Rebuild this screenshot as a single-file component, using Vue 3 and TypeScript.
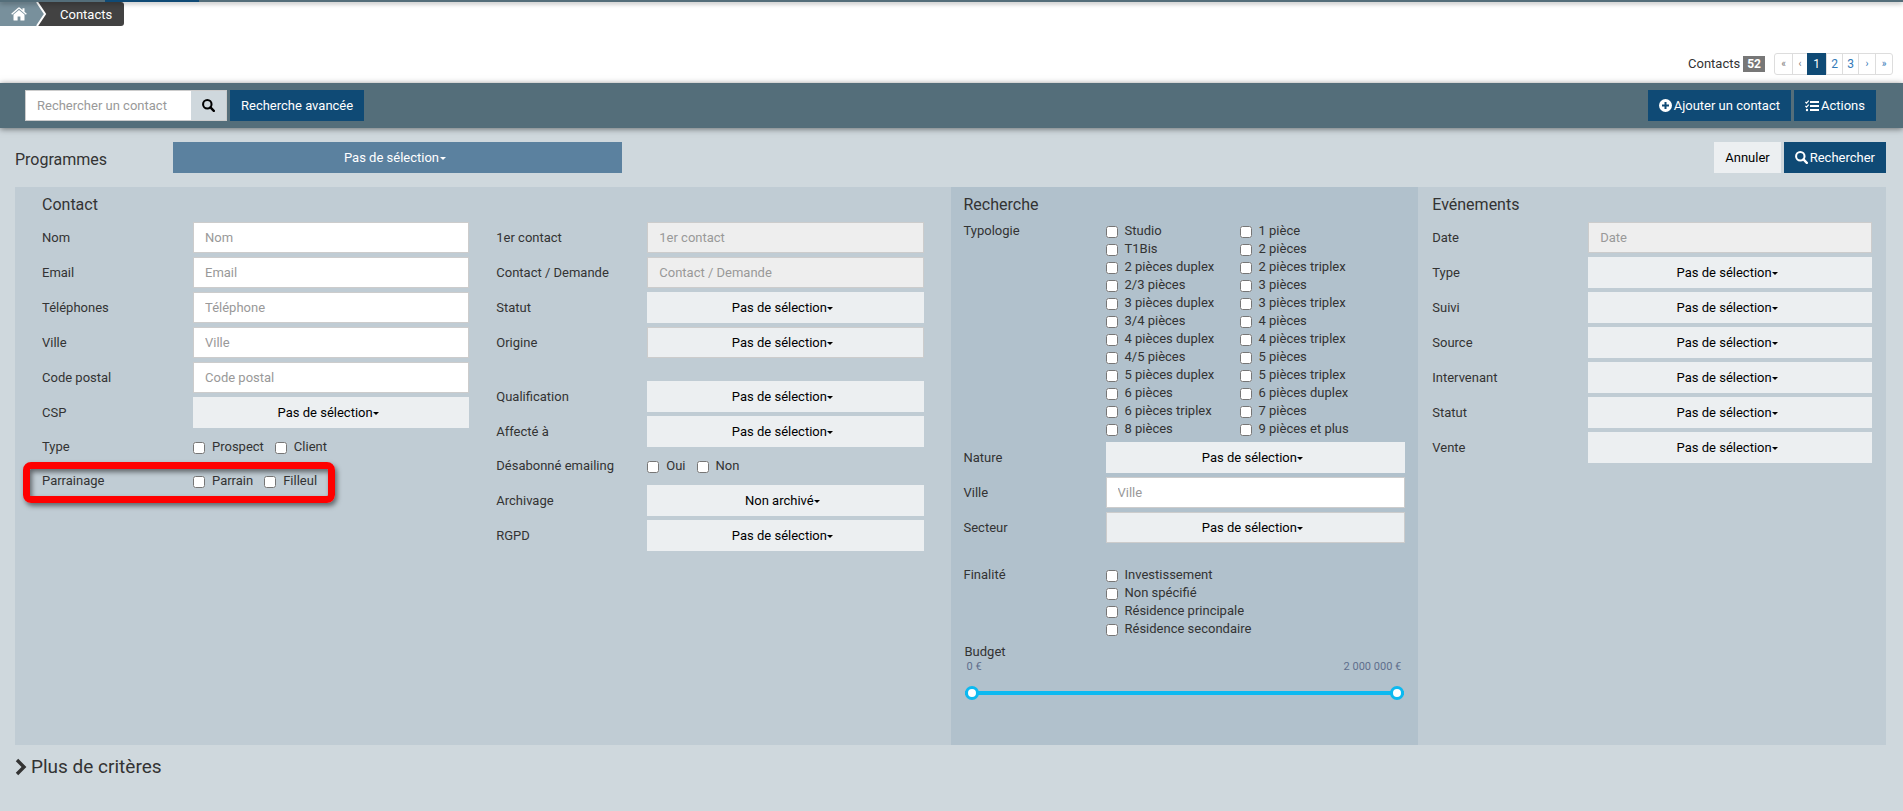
<script setup lang="ts">
import { ref } from 'vue'

interface Field {
  id: string
  label: string
  kind: 'text' | 'locked' | 'select' | 'checks'
  value?: string
  options?: string[]
  bordered?: boolean
  spaced?: boolean
  marked?: boolean
}

const none = 'Pas de sélection'

const contactLeft: Field[] = [
  { id: 'nom', label: 'Nom', kind: 'text', value: 'Nom' },
  { id: 'email', label: 'Email', kind: 'text', value: 'Email' },
  { id: 'tel', label: 'Téléphones', kind: 'text', value: 'Téléphone' },
  { id: 'ville', label: 'Ville', kind: 'text', value: 'Ville' },
  { id: 'cp', label: 'Code postal', kind: 'text', value: 'Code postal' },
  { id: 'csp', label: 'CSP', kind: 'select', value: none },
  { id: 'type', label: 'Type', kind: 'checks', options: ['Prospect', 'Client'] },
  { id: 'parrainage', label: 'Parrainage', kind: 'checks', options: ['Parrain', 'Filleul'], marked: true },
]

const contactRight: Field[] = [
  { id: 'premier', label: '1er contact', kind: 'locked', value: '1er contact' },
  { id: 'demande', label: 'Contact / Demande', kind: 'locked', value: 'Contact / Demande' },
  { id: 'statut', label: 'Statut', kind: 'select', value: none },
  { id: 'origine', label: 'Origine', kind: 'select', value: none, bordered: true },
  { id: 'qualification', label: 'Qualification', kind: 'select', value: none, spaced: true },
  { id: 'affecte', label: 'Affecté à', kind: 'select', value: none },
  { id: 'desabonne', label: 'Désabonné emailing', kind: 'checks', options: ['Oui', 'Non'] },
  { id: 'archivage', label: 'Archivage', kind: 'select', value: 'Non archivé' },
  { id: 'rgpd', label: 'RGPD', kind: 'select', value: none },
]

const rechercheFields: Field[] = [
  { id: 'nature', label: 'Nature', kind: 'select', value: none },
  { id: 'r-ville', label: 'Ville', kind: 'text', value: 'Ville' },
  { id: 'secteur', label: 'Secteur', kind: 'select', value: none, bordered: true },
]

const evenements: Field[] = [
  { id: 'date', label: 'Date', kind: 'locked', value: 'Date' },
  { id: 'e-type', label: 'Type', kind: 'select', value: none },
  { id: 'suivi', label: 'Suivi', kind: 'select', value: none },
  { id: 'source', label: 'Source', kind: 'select', value: none },
  { id: 'intervenant', label: 'Intervenant', kind: 'select', value: none },
  { id: 'e-statut', label: 'Statut', kind: 'select', value: none },
  { id: 'vente', label: 'Vente', kind: 'select', value: none },
]

const contactGroups = [
  { name: 'contact-left', fields: contactLeft },
  { name: 'contact-right', fields: contactRight },
]

const typologies = [
  'Studio', '1 pièce', 'T1Bis', '2 pièces', '2 pièces duplex', '2 pièces triplex',
  '2/3 pièces', '3 pièces', '3 pièces duplex', '3 pièces triplex', '3/4 pièces', '4 pièces',
  '4 pièces duplex', '4 pièces triplex', '4/5 pièces', '5 pièces', '5 pièces duplex', '5 pièces triplex',
  '6 pièces', '6 pièces duplex', '6 pièces triplex', '7 pièces', '8 pièces', '9 pièces et plus',
]
const finalites = ['Investissement', 'Non spécifié', 'Résidence principale', 'Résidence secondaire']

const pages = ['«', '‹', '1', '2', '3', '›', '»']
const budgetMin = ref(0)
const budgetMax = ref(2000000)
</script>

<template>
  <div class="page">
    <div class="topline"><span class="topline-active"></span></div>

    <header class="head">
      <nav class="crumbs" aria-label="Fil d'Ariane">
        <a class="crumb-home" href="#" aria-label="Accueil">
          <svg width="16" height="14" viewBox="0 0 16 14">
            <path fill="#fff" d="M8 2.9 2.5 7.6V13q0 .5.5.5h3.6V9.6h2.8v3.9H13q.5 0 .5-.5V7.600zM15.800 6.700 13.500 4.700V1.200h-2v1.800L8.900.7Q8 0 7.100.7L.2 6.700l.9 1L8 1.800l6.900 5.900z" />
          </svg>
        </a>
        <svg class="crumb-sep" width="12" height="24" viewBox="0 0 12 24">
          <path fill="#78909c" d="M0 0h1l8 12-8 12H0z" />
          <path fill="#424242" d="M1 0h11v24H1l8-12z" />
          <path fill="none" stroke="#fff" stroke-width="2" d="M1 0l8 12-8 12" />
        </svg>
        <a class="crumb-page" href="#">Contacts</a>
      </nav>
      <div class="pager">
        <span>Contacts</span>
        <span class="count">52</span>
        <nav class="pages" aria-label="Pagination">
          <a v-for="p in pages" :key="p" href="#" :class="{ current: p === '1', arrow: !/\d/.test(p), prev: p === '‹', off: p === '«' || p === '‹' }">{{ p }}</a>
        </nav>
      </div>
    </header>

    <div class="toolbar">
      <form class="quick" @submit.prevent>
        <input type="text" placeholder="Rechercher un contact" aria-label="Rechercher un contact" />
        <button class="quick-go" type="submit" aria-label="Lancer la recherche">
          <svg width="13" height="13" viewBox="0 0 12 12"><circle cx="4.900" cy="4.900" r="3.900" fill="none" stroke="#000" stroke-width="1.900" /><path d="M7.800 7.800 10.900 10.900" stroke="#000" stroke-width="2.200" stroke-linecap="round" /></svg>
        </button>
      </form>
      <button class="btn primary" type="button">Recherche avancée</button>
      <div class="right">
        <button class="btn primary" type="button">
          <svg width="13" height="13" viewBox="0 0 13 13"><circle cx="6.500" cy="6.500" r="6.500" fill="#fff" /><path d="M6.500 3v7M3 6.500h7" stroke="#0f4a75" stroke-width="2" /></svg>
          Ajouter un contact
        </button>
        <button class="btn primary" type="button">
          <svg width="14" height="12" viewBox="0 0 14 12"><path d="M5 2h9M5 6h9M5 10h9" stroke="#fff" stroke-width="2" /><path d="M.4 2l1.100 1.100L3.700.7M.4 6l1.100 1.100 2.200-2.400" fill="none" stroke="#fff" stroke-width="1.200" /><circle cx="2" cy="10" r="1.200" fill="#fff" /></svg>
          Actions
        </button>
      </div>
    </div>

    <main class="search">
      <div class="programs">
        <label for="programmes">Programmes</label>
        <span class="pick program-pick"><select id="programmes"><option>{{ none }}</option></select></span>
        <div class="right">
          <button class="btn plain" type="button">Annuler</button>
          <button class="btn primary" type="button">
            <svg width="13" height="13" viewBox="0 0 12 12"><circle cx="4.900" cy="4.900" r="3.900" fill="none" stroke="#fff" stroke-width="1.900" /><path d="M7.800 7.800 10.900 10.900" stroke="#fff" stroke-width="2.200" stroke-linecap="round" /></svg>
            Rechercher
          </button>
        </div>
      </div>

      <div class="panels">
        <section class="panel contact">
          <h2>Contact</h2>
          <div class="pair">
            <div v-for="g in contactGroups" :key="g.name" class="fields">
              <div v-for="f in g.fields" :key="f.id" class="row" :class="{ spaced: f.spaced, marked: f.marked }" :role="f.kind === 'checks' ? 'group' : undefined" :aria-labelledby="f.kind === 'checks' ? f.id + '-l' : undefined">
                <span v-if="f.kind === 'checks'" :id="f.id + '-l'" class="name">{{ f.label }}</span>
                <label v-else class="name" :for="f.id">{{ f.label }}</label>
                <div v-if="f.kind === 'checks'" class="checks">
                  <label v-for="o in f.options" :key="o" class="check"><input type="checkbox" />{{ o }}</label>
                </div>
                <span v-else-if="f.kind === 'select'" class="pick" :class="{ bordered: f.bordered, short: f.value !== none }"><select :id="f.id"><option>{{ f.value }}</option></select></span>
                <input v-else :id="f.id" class="text" type="text" :placeholder="f.value" :readonly="f.kind === 'locked'" />
              </div>
            </div>
          </div>
        </section>

        <section class="panel recherche">
          <h2>Recherche</h2>
          <div class="fields">
            <div class="row top" role="group" aria-labelledby="typo-l">
              <span id="typo-l" class="name">Typologie</span>
              <div class="grid-checks">
                <label v-for="t in typologies" :key="t" class="check"><input type="checkbox" />{{ t }}</label>
              </div>
            </div>
            <div v-for="f in rechercheFields" :key="f.id" class="row">
              <label class="name" :for="f.id">{{ f.label }}</label>
              <span v-if="f.kind === 'select'" class="pick" :class="{ bordered: f.bordered }"><select :id="f.id"><option>{{ f.value }}</option></select></span>
              <input v-else :id="f.id" class="text" type="text" :placeholder="f.value" />
            </div>
            <div class="row top spaced" role="group" aria-labelledby="final-l">
              <span id="final-l" class="name">Finalité</span>
              <div class="list-checks">
                <label v-for="t in finalites" :key="t" class="check"><input type="checkbox" />{{ t }}</label>
              </div>
            </div>
          </div>
          <div class="budget" role="group" aria-labelledby="budget-l">
            <span id="budget-l">Budget</span>
            <div class="bounds"><span>0 €</span><span>2 000 000 €</span></div>
            <div class="slider">
              <input v-model.number="budgetMin" type="range" min="0" max="2000000" step="10000" aria-label="Budget minimum" />
              <input v-model.number="budgetMax" type="range" min="0" max="2000000" step="10000" aria-label="Budget maximum" />
            </div>
          </div>
        </section>

        <section class="panel evenements">
          <h2>Evénements</h2>
          <div class="fields">
            <div v-for="f in evenements" :key="f.id" class="row">
              <label class="name" :for="f.id">{{ f.label }}</label>
              <span v-if="f.kind === 'select'" class="pick"><select :id="f.id"><option>{{ f.value }}</option></select></span>
              <input v-else :id="f.id" class="text" type="text" :placeholder="f.value" readonly />
            </div>
          </div>
        </section>
      </div>

      <button class="more" type="button">
        <svg width="12" height="18" viewBox="0 0 12 18"><path d="M2 2l7 7-7 7" fill="none" stroke="#333" stroke-width="3.400" /></svg>
        Plus de critères
      </button>
    </main>
  </div>
</template>

<style>
body { margin: 0; background: #cfd8dd; }
</style>

<style scoped>
.page { min-height: 100vh; display: flex; flex-direction: column; background: #cfd8dd; color: #333; font: 13px/18px Roboto, "Liberation Sans", sans-serif; }
.page *, .page *::after { box-sizing: border-box; }
input, select, button { font: inherit; border-radius: 0; margin: 0; }
a { color: inherit; text-decoration: none; }

.topline { height: 2px; background: #546e7a; box-shadow: 0 1px 5px rgba(0, 0, 0, 0.5); display: flex; z-index: 1; }
.topline-active { width: 94px; margin-left: 105px; background: #0f4a75; }

.head { background: #fff; height: 81px; display: flex; justify-content: space-between; align-items: flex-start; }
.crumbs { display: flex; height: 24px; line-height: 25px; color: #fff; }
.crumb-home { width: 36px; background: #78909c; display: flex; align-items: center; padding-left: 11px; }
.crumb-page { background: #424242; padding: 0 12px; border-radius: 0 3px 3px 0; }
.pager { display: flex; align-items: center; margin: 51px 10px 0 0; }
.count { background: #777; color: #fff; font-size: 12px; font-weight: 700; line-height: 16px; padding: 0 4px; margin: 0 9px 0 3px; }
.pages { display: flex; border: 1px solid #ddd; border-radius: 3px; height: 22px; font-size: 12px; line-height: 20px; color: #337ab7; }
.pages a { width: 16px; text-align: center; border-left: 1px solid #ddd; }
.pages a:first-child { border-left: 0; }
.pages a.arrow { width: 17px; font-size: 10px; }
.pages a.prev { width: 15px; }
.pages a.off { color: #777; }
.pages a.current { background: #0f4a75; color: #fff; width: 19px; margin: -1px 0; line-height: 22px; border: 0; }

.toolbar { height: 45px; background: #546e7a; box-shadow: 0 1px 6px rgba(0, 0, 0, 0.5); display: flex; align-items: center; gap: 3px; padding: 0 27px 0 25px; z-index: 1; }
.quick { display: flex; height: 31px; border: 1px solid #ccc; }
.quick input { width: 165px; border: 0; padding: 0 11px; outline: 0; }
.quick-go { width: 35px; border: 0; background: #cfd8dd; display: flex; align-items: center; justify-content: center; padding: 0; }
::placeholder { color: #999; opacity: 1; }
.right { margin-left: auto; display: flex; gap: 3px; }
.btn { height: 31px; border: 0; padding: 0 11px; display: flex; align-items: center; gap: 2px; }
.primary { background: #0f4a75; color: #fff; }
.plain { background: #eceff1; color: #000; }

.search { padding: 14px 17px 0 15px; display: flex; flex-direction: column; align-items: stretch; }
.programs { display: flex; align-items: center; height: 31px; margin-bottom: 14px; }
.programs > label { font-size: 16px; width: 158px; padding-top: 4px; }
.program-pick { flex: 0 0 24%; }
.pick { position: relative; display: block; height: 31px; color: #000; }
.pick select { appearance: none; width: 100%; height: 31px; border: 0; padding: 0 12px 0 0; background: #eceff1; color: #000; text-align: center; text-align-last: center; }
.pick::after { content: ""; position: absolute; left: calc(50% + 42px); top: 15px; border: 3px solid transparent; border-top-color: currentColor; border-bottom: 0; pointer-events: none; }
.pick.short::after { left: calc(50% + 29px); }
.pick.bordered select { border: 1px solid #ccc; }
.program-pick { color: #fff; }
.program-pick select { background: #5b819f; color: #fff; }

.panels { display: grid; grid-template-columns: 2fr 1fr 1fr; min-height: 558px; }
.panel { background: #c0ccd4; padding: 9px 14px 0; }
.panel.contact { padding: 9px 27px 0; }
.panel.recherche { background: #b1c1cc; padding: 9px 13px 0; }
h2 { margin: 0 0 8px; font-size: 16px; line-height: 18px; font-weight: 400; }
.pair { display: grid; grid-template-columns: 1fr 1fr; gap: 27px; }
.fields { display: flex; flex-direction: column; gap: 4px; }
.row { display: grid; grid-template-columns: 151px 1fr; align-items: center; min-height: 30px; position: relative; }
.recherche .row { grid-template-columns: 142px 1fr; }
.evenements .row { grid-template-columns: 156px 1fr; }
.row.top { align-items: start; }
.row.spaced { margin-top: 19px; }
.text { width: 100%; height: 31px; border: 1px solid #ccc; background: #fff; padding: 0 11px; outline: 0; }
.text:read-only { background: #eee; }
.checks { display: flex; gap: 11px; }
.check { display: flex; align-items: center; gap: 7px; }
.check input { width: 12px; height: 12px; margin: 1px 0 0; }
.grid-checks { display: grid; grid-template-columns: 134px 1fr; }
.marked::after { content: ""; position: absolute; left: -19px; top: -4px; width: 312px; height: 41px; border: 7px solid #f00; border-radius: 8px; box-shadow: 2px 3px 5px rgba(0, 0, 0, 0.5), inset 2px 3px 5px rgba(0, 0, 0, 0.5); pointer-events: none; }

.budget { margin-top: 5px; display: flex; flex-direction: column; padding-left: 1px; }
.bounds { display: flex; justify-content: space-between; font-size: 11px; line-height: 12px; color: #5f6f8c; padding: 0 4px 0 2px; }
.slider { display: grid; height: 14px; margin: 13px 1px 0 0; }
.slider input { grid-area: 1 / 1; appearance: none; width: 100%; height: 14px; background: linear-gradient(#0db9f0, #0db9f0) center / 100% 4px no-repeat; pointer-events: none; }
.slider input + input { background: none; }
.slider input::-webkit-slider-thumb { appearance: none; width: 14px; height: 14px; border-radius: 50%; border: 3px solid #0db9f0; background: #fff; pointer-events: auto; }

.more { align-self: flex-start; border: 0; background: none; color: #333; padding: 0; margin-top: 10px; display: flex; align-items: center; gap: 4px; font-size: 19px; line-height: 24px; }
</style>
